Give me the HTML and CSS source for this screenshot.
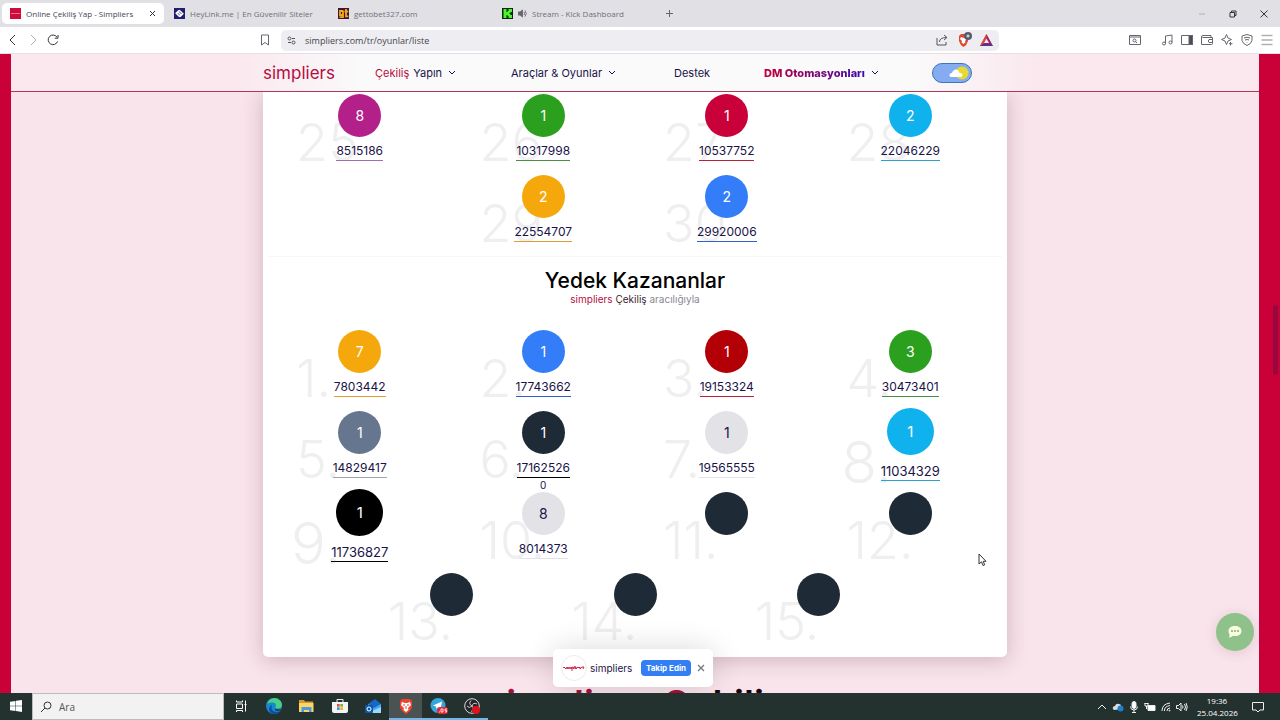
FILE: index.html
```html
<!DOCTYPE html>
<html lang="tr">
<head>
<meta charset="utf-8">
<meta name="viewport" content="width=device-width, initial-scale=1">
<title>Online Çekiliş Yap - Simpliers</title>
<link rel="stylesheet" href="styles.css">
</head>
<body>
<div class="tabs">
  <div class="tab active"><svg class="fav" viewBox="0 0 11 11"><path fill="#cf0a3c" d="M0 0h11v11H0z"/><path stroke="#e8718c" d="M1 5.500h9"/></svg><span class="tab-title">Online Çekiliş Yap - Simpliers</span><button class="icon" aria-label="Sekmeyi kapat"><svg width="7" height="7" viewBox="0 0 7 7"><path d="M1 1l5 5M6 1l-5 5"/></svg></button></div>
  <div class="tab"><svg class="fav" viewBox="0 0 11 11"><path fill="#211d70" d="M0 0h11v11H0z"/><g fill="none" stroke="#fff" stroke-width="1.600"><path d="M5 2.500L2.300 5.200l3.500 3.500M6 8.500l2.700-2.700-3.500-3.500M4 4l3 3"/></g></svg><span class="tab-title">HeyLink.me | En Güvenilir Siteler</span></div>
  <div class="tab"><svg class="fav" viewBox="0 0 11 11"><path fill="#3b1730" d="M0 0h11v11H0z"/><g fill="none" stroke="#f5a81c" stroke-width="1.800"><path d="M5 3H2v4h3M5 2.500v6.700H1.500M8 1v7.300h2.300M6.500 3.500h3.800"/></g></svg><span class="tab-title">gettobet327.com</span></div>
  <div class="tab"><svg class="fav" viewBox="0 0 11 11"><path fill="#07280a" d="M0 0h11v11H0z"/><path fill="#4bf52c" d="M1.500 1H4.500v3h1V3h1V1H10v3H8.500v1h-1v1h1v1H10v3H6.500V8h-1V7h-1v3h-3z"/></svg><svg width="9" height="9" viewBox="0 0 9 9" class="line"><path fill="#666" d="M0 3h2l2.500-2v7L2 6H0z"/><path d="M6 3q1 1.500 0 3M7 1.500q2.500 3 0 6"/></svg><span class="tab-title">Stream - Kick Dashboard</span></div>
  <button class="icon new-tab" aria-label="Yeni sekme"><svg width="7" height="7" viewBox="0 0 7 7"><path d="M3.500 0v7M0 3.500h7"/></svg></button>
  <div class="win">
    <button class="icon faint" aria-label="Küçült"><svg width="8" height="8" viewBox="0 0 8 8"><path d="M1 4h6"/></svg></button>
    <button class="icon" aria-label="Geri yükle"><svg width="8" height="8" viewBox="0 0 8 8"><path d="M1 2.500h4.500V7H1zM2.500 2V1H7v4.500H6"/></svg></button>
    <button class="icon" aria-label="Kapat"><svg width="8" height="8" viewBox="0 0 8 8"><path d="M.5.5l7 7M7.500.5l-7 7"/></svg></button>
  </div>
</div>

<div class="toolbar">
  <div class="tb-left">
    <button class="icon" aria-label="Geri"><svg width="12" height="12" viewBox="0 0 12 12"><path d="M8 1L3 6l5 5"/></svg></button>
    <button class="icon faint" aria-label="İleri"><svg width="12" height="12" viewBox="0 0 12 12"><path d="M4 1l5 5-5 5"/></svg></button>
    <button class="icon" aria-label="Yenile"><svg width="12" height="12" viewBox="0 0 12 12"><path d="M10.500 7.500A4.800 4.800 0 1 1 10 3.200M11 1v3.200H7.800"/></svg></button>
    <button class="icon soft mark" aria-label="Yer işareti"><svg width="10" height="12" viewBox="0 0 10 12"><path d="M1.500 1h7v10L5 8.500 1.500 11z"/></svg></button>
  </div>
  <div class="address">
    <svg class="line" width="9" height="9" viewBox="0 0 9 9"><circle cx="2.500" cy="2.500" r="1.500"/><circle cx="6.500" cy="6.500" r="1.500"/><path d="M5 2.500h3M1 6.500h3"/></svg>
    <input type="text" value="simpliers.com/tr/oyunlar/liste" aria-label="Adres">
    <svg class="line" width="12" height="12" viewBox="0 0 12 12"><path d="M1 4v7h9V8M3.500 8q0-4.500 7-4.500M8 1l3 2.500L8 6"/></svg>
    <svg width="16" height="16" viewBox="0 0 16 16"><path fill="#e0482c" d="M3 4l2-2h5l2 2v5q-1 4-4.500 6Q4 13 3 9z"/><path fill="#fff" d="M5 5l2 .7h1L10 5l1 2-2 2 .5 1.500-2 1.500-2-1.500L6 9 4 7z"/><circle cx="12" cy="4" r="4" fill="#575a6e"/><circle cx="12" cy="4" r="1" fill="none" stroke="#fff"/></svg>
    <svg width="13" height="12" viewBox="0 0 13 12"><path fill="#9b2265" d="M6.500 0L13 12H0z"/><path fill="#e04a2f" d="M6.500 0L0 12l3-1.500L6.500 4z"/><path fill="#54358f" d="M0 12h13l-3-2H3z"/><path fill="#f5eef4" d="M6.500 4.500L9 9H4z"/></svg>
  </div>
  <div class="tb-right">
    <button class="icon soft find" aria-label="Sayfada ara"><svg width="12" height="12" viewBox="0 0 12 12"><path d="M.5 1.500h11v9H.5zM.5 3h11"/><circle cx="5.500" cy="6.500" r="1.500"/><path d="M6.500 7.500L8 9"/></svg></button>
    <button class="icon soft" aria-label="Müzik"><svg width="12" height="12" viewBox="0 0 12 12"><path d="M4.500 9.500V2l6.500-1v7.500"/><circle cx="3" cy="9.500" r="1.500"/><circle cx="9.500" cy="8.500" r="1.500"/></svg></button>
    <button class="icon soft" aria-label="Kenar çubuğu"><svg width="12" height="12" viewBox="0 0 12 12"><path d="M.5 1.500h11v9H.5z"/><path fill="#4c4c55" d="M8 1.500h3.500v9H8z"/></svg></button>
    <button class="icon soft" aria-label="Cüzdan"><svg width="12" height="12" viewBox="0 0 12 12"><path d="M10 3.500V1.500H2q-1.500 0-1.500 1.500v7.500h10q1 0 1-1v-6h-10M11.500 5.500H8q-1.500 1.500 0 3h3.500"/></svg></button>
    <button class="icon soft" aria-label="Leo"><svg width="12" height="12" viewBox="0 0 12 12"><path d="M5.500.5L7 4l3.500 1.500L7 7l-1.500 3.500L4 7 .5 5.500 4 4zM9.500 8v3.500M8 9.700h3.500"/></svg></button>
    <button class="icon soft" aria-label="VPN"><svg width="12" height="12" viewBox="0 0 12 12"><path d="M6 .5l5 1.500v4.500Q10 10 6 11.500 2 10 1 6.500V2zM3 4q3-1.500 6 0M4 6q2-1 4 0M6 8v.5"/></svg></button>
    <button class="icon faint" aria-label="Menü"><svg width="12" height="12" viewBox="0 0 12 12"><path d="M.5 1.500h11M.5 6h11M.5 10.500h11" stroke-width="1.300"/></svg></button>
  </div>
</div>

<main class="frame">
  <div class="page">
    <header class="nav">
      <nav class="nav-inner">
        <a class="brand" href="#">simpliers</a>
        <a href="#"><span class="accent">Çekiliş</span> Yapın <svg class="chev" viewBox="0 0 8 5"><path d="M1 1l3 3 3-3"/></svg></a>
        <a href="#">Araçlar &amp; Oyunlar <svg class="chev" viewBox="0 0 8 5"><path d="M1 1l3 3 3-3"/></svg></a>
        <a href="#">Destek</a>
        <a href="#"><b class="dm">DM Otomasyonları</b> <svg class="chev" viewBox="0 0 8 5"><path d="M1 1l3 3 3-3"/></svg></a>
        <button class="theme" aria-label="Tema"><svg width="40" height="20" viewBox="0 0 40 20"><rect x=".5" y=".5" width="39" height="19" rx="9.500" fill="#85abf0" stroke="#3977b8"/><circle cx="30" cy="10" r="6.500" fill="#e7d832"/><path fill="#fff" d="M19 14q-2-.5-1.500-2.500.5-1.500 2.500-1.500 1-3.500 4-3.500 2.500 0 3.500 3.500 3 0 3 2 0 2-2 2z"/></svg></button>
      </nav>
    </header>

    <section class="card">
      <div class="grid">
        <div class="item"><span class="ghost">25</span><span class="ball purple">8</span><span class="code">8515186</span></div>
        <div class="item"><span class="ghost">26</span><span class="ball green">1</span><span class="code">10317998</span></div>
        <div class="item"><span class="ghost">27</span><span class="ball crimson">1</span><span class="code">10537752</span></div>
        <div class="item"><span class="ghost">28</span><span class="ball sky">2</span><span class="code">22046229</span></div>
        <div class="item"><span class="ghost">29</span><span class="ball amber">2</span><span class="code">22554707</span></div>
        <div class="item"><span class="ghost">30</span><span class="ball blue">2</span><span class="code">29920006</span></div>
      </div>
      <div class="heading">
        <h1>Yedek Kazananlar</h1>
        <p><span class="accent">simpliers</span> <span class="fade">Çekiliş</span> aracılığıyla</p>
      </div>
      <div class="grid">
        <div class="item"><span class="ghost">1.</span><span class="ball amber">7</span><span class="code">7803442</span></div>
        <div class="item"><span class="ghost">2.</span><span class="ball blue">1</span><span class="code">17743662</span></div>
        <div class="item"><span class="ghost">3.</span><span class="ball red">1</span><span class="code">19153324</span></div>
        <div class="item"><span class="ghost">4.</span><span class="ball green">3</span><span class="code">30473401</span></div>
        <div class="item"><span class="ghost">5.</span><span class="ball slate">1</span><span class="code">14829417</span></div>
        <div class="item"><span class="ghost">6.</span><span class="ball navy">1</span><span class="code black-line">17162526</span></div>
        <div class="item"><span class="ghost">7.</span><span class="ball light">1</span><span class="code">19565555</span></div>
        <div class="item big"><span class="ghost">8.</span><span class="ball sky">1</span><span class="code">11034329</span></div>
        <div class="item big"><span class="ghost">9.</span><span class="ball black">1</span><span class="code">11736827</span></div>
        <div class="item"><span class="ghost">10.</span><span class="count">0</span><span class="ball light">8</span><span class="code">8014373</span></div>
        <div class="item"><span class="ghost">11.</span><span class="ball navy"></span></div>
        <div class="item"><span class="ghost">12.</span><span class="ball navy"></span></div>
        <div class="item"><span class="ghost">13.</span><span class="ball navy"></span></div>
        <div class="item"><span class="ghost">14.</span><span class="ball navy"></span></div>
        <div class="item"><span class="ghost">15.</span><span class="ball navy"></span></div>
      </div>
    </section>
    <h2 class="next"><span>simpliers Ç</span>ekiliş</h2>
    <div class="toast">
      <svg width="26" height="26" viewBox="0 0 26 26"><circle cx="13" cy="13" r="12.500" fill="#fff" stroke="#ececf0"/><path d="M2 13q1-2 2 0t2-1v2l1-2 1 2 1-2 1 2 1-2v4m0-4q3 0 1 2l2-3v3l1-2v2l2-2 1 1 1-1v2l2-2 2 0-1 2" fill="none" stroke="#cf2650"/></svg>
      <span class="toast-name">simpliers</span>
      <button class="follow">Takip Edin</button>
      <button class="icon dismiss" aria-label="Kapat"><svg width="8" height="8" viewBox="0 0 8 8"><path d="M1 1l6 6M7 1L1 7" stroke-width="1.300"/></svg></button>
    </div>
    <button class="chat" aria-label="Sohbet"><svg width="14" height="12" viewBox="0 0 14 12"><path fill="#fbfbe0" d="M7 0c4 0 6.500 2 6.500 5S11 10 7 10q-1 0-2-.3Q3.500 11.500.5 11.500 2 10 1.500 8.500.5 7 .5 5C.5 2 3 0 7 0z"/><g fill="#79b275"><circle cx="4" cy="5" r="1"/><circle cx="7" cy="5" r="1"/><circle cx="10" cy="5" r="1"/></g></svg></button>
    <svg class="cursor" width="9" height="14" viewBox="0 0 9 14"><path d="M1 1v10l2.500-2.200L5 12.500l1.700-.7L5.200 8.300H8z" fill="#fff" stroke="#333"/></svg>
  </div>
  <div class="thumb"></div>
</main>

<footer class="taskbar">
  <button class="task start" aria-label="Başlat"><svg width="12" height="12" viewBox="0 0 12 12"><path fill="#fff" d="M0 1.700l5.500-.8v4.800H0zM6 .8L12 0v5.700H6zM0 6.200h5.500V11L0 10.300zM6 6.200h6V12l-6-.9z"/></svg></button>
  <label class="search"><svg class="line" width="12" height="12" viewBox="0 0 12 12"><circle cx="7.500" cy="4.500" r="3.500"/><path d="M5 7L1 11"/></svg><input type="text" placeholder="Ara" aria-label="Ara"></label>
  <button class="task" aria-label="Görev görünümü"><svg width="12" height="12" viewBox="0 0 12 12" fill="none" stroke="#fff"><path d="M1.500 4h6v4.500h-6zM1.500 .5v1.500h6V.5M1.500 12v-1.500h6V12M10.500 .5v11M9.500 4.500h2"/></svg></button>
  <button class="task" aria-label="Edge"><svg width="16" height="16" viewBox="0 0 16 16"><circle cx="8" cy="8" r="8" fill="#1787cf"/><path fill="#4bce87" d="M1 6Q3 0 8.500 0 15 .5 16 6.500q0 4-4.500 4-2.500 0-2-1.500Q11 5 7 4.500 3 4 1 6z"/><path fill="#0a4fa0" d="M6 7q-2 6 4 7 3 0 4.500-1.500Q12 16 8 16 3 15 3 11q.5-3 3-4z"/><path fill="#24302f" d="M9.500 9q-1.500 2.500 3 2.500 2 0 3-1-1 2.500-4 2.500-4-1-2-4z"/></svg></button>
  <button class="task" aria-label="Dosya Gezgini"><svg width="15" height="14" viewBox="0 0 15 14"><path fill="#d79a28" d="M0 1h5l1 1.500h8V5H0z"/><path fill="#fbd567" d="M0 4h14.500v9H0z"/><path fill="#4b9bdc" d="M2.500 8h10v5H10v-2H5v2H2.500z"/></svg></button>
  <button class="task" aria-label="Store"><svg width="16" height="16" viewBox="0 0 16 16"><path fill="none" stroke="#eee" d="M5 4V1.500h6V4"/><path fill="#f4f4f4" d="M0 4h16v9q0 2-2 2H2q-2 0-2-2z"/><path fill="#e45034" d="M5 6h2.700v2.700H5z"/><path fill="#7bb737" d="M8.300 6H11v2.700H8.300z"/><path fill="#2b9ae1" d="M5 9.300h2.700V12H5z"/><path fill="#f4b625" d="M8.300 9.300H11V12H8.300z"/></svg></button>
  <button class="task" aria-label="Outlook"><svg width="16" height="16" viewBox="0 0 16 16"><path fill="#1769c5" d="M3 6l7-5 6 5v9H3z"/><path fill="#47a8ef" d="M3 6l6 4 7-4v9H3z"/><path fill="#9dd8ff" d="M3 15l13-6v6z"/><rect y="7" width="8" height="8" rx="1" fill="#0c59ac"/><circle cx="4" cy="11" r="2" fill="none" stroke="#fff"/></svg></button>
  <button class="task open current" aria-label="Brave"><svg width="14" height="16" viewBox="0 0 14 16"><path fill="#ef452f" d="M1 3l2-2h8l2 2v6q-1 4-6 7Q2 13 1 9z"/><path fill="#fff" d="M3 4l3 1h2l3-1 1 3-3 3 .5 2L7 14l-2.500-2L5 10 2 7z"/><path stroke="#ef452f" d="M4 7h2M8 7h2M7 8v3"/></svg></button>
  <button class="task open" aria-label="Telegram"><svg width="18" height="16" viewBox="0 0 18 16"><circle cx="8" cy="7.500" r="7.500" fill="#35a6dc"/><path fill="#fff" d="M3 7.500L12 3.500l-1.500 8L8 9.500 6.500 11 6 8.500z"/><rect x="7" y="9" width="11" height="7" rx="3" fill="#e02a3c"/><path d="M9 14h1M11 11h2v3h-2zM17 11h-2v1.500h1.500V14H15" fill="none" stroke="#fff" stroke-width=".8"/></svg></button>
  <button class="task open" aria-label="OBS"><svg width="16" height="16" viewBox="0 0 16 16"><circle cx="8" cy="8" r="7.300" fill="#24262b" stroke="#ddd"/><path d="M8 8q-4-2-1-5.500M8 8q1-4 5-2M8 8q3 3-1 5.500M8 8q-3 3-5 0" fill="none" stroke="#ccc"/><circle cx="12" cy="12" r="4" fill="#e0121c"/></svg></button>
  <div class="tray">
    <svg width="10" height="10" viewBox="0 0 10 10"><path d="M1 7l4-4 4 4"/></svg>
    <svg width="12" height="10" viewBox="0 0 12 10"><path fill="#d8dde2" stroke="none" d="M2 8Q0 7 1 5q1-1 2-1 1-3 4-2 2 0 2 2 2 1 2 3z"/><circle cx="8.500" cy="6.500" r="3" fill="#1d7ed2" stroke="none"/></svg>
    <svg width="10" height="12" viewBox="0 0 10 12"><rect x="3" y=".5" width="4" height="7" rx="2" fill="#fff"/><path d="M1.500 5.500q0 3.500 3.500 3.500t3.500-3.500M5 9v2.500M3 11.500h4"/></svg>
    <svg width="12" height="10" viewBox="0 0 12 10"><path fill="#fff" d="M4 3.500h7v5H4z"/><path d="M.5 1.500h4M1 1v3h3V1M2.500 4v3"/></svg>
    <svg width="10" height="10" viewBox="0 0 10 10"><path d="M1 9Q1 2 9 1M3.500 9Q3 4.500 9 3.500M6 9q0-3 3-3"/><circle cx="8.500" cy="8.500" r=".5"/></svg>
    <svg width="12" height="10" viewBox="0 0 12 10"><path d="M.5 3.500h2L5 1v8L2.500 6.500h-2zM6.500 3.500q1 1.500 0 3M8.500 2q2 3 0 6M10 1q2.500 4 0 8"/></svg>
    <time class="clock">19:36<br>25.04.2026</time>
    <svg width="12" height="12" viewBox="0 0 12 12"><path d="M.5 1.500h11v7.500H8l-2 2-2-2H.5z"/></svg>
  </div>
</footer>
</body>
</html>
```
FILE: styles.css
```css
* { box-sizing: border-box; }
body {
  margin: 0;
  height: 100vh;
  display: flex;
  flex-direction: column;
  overflow: hidden;
  font-family: Inter, "Liberation Sans", sans-serif;
  font-size: 11px;
  color: #191348;
}
button { border: 0; padding: 0; background: none; font: inherit; color: inherit; }
a { color: inherit; text-decoration: none; }
svg { flex: none; display: block; }
h1, h2, p { margin: 0; }
.icon { display: flex; align-items: center; justify-content: center; color: #35353b; }
.icon svg, .line { fill: none; stroke: currentColor; }
.soft { color: #66666e; }
.faint { color: #b0b0b5; }

.tabs, .toolbar, .taskbar { font-family: "Open Sans", "Noto Sans", sans-serif; flex: none; }
.tabs { display: flex; align-items: center; height: 27px; padding: 0 12px 0 2px; background: #e1e0e5; font-size: 8px; color: #707077; }
.tab { display: flex; align-items: center; gap: 5px; width: 162px; height: 21px; margin-right: 2px; padding: 0 8px; border-radius: 5px; white-space: nowrap; }
.tab.active { background: #fff; color: #45454c; }
.tab-title { flex: 1; }
.fav { width: 11px; height: 11px; }
.new-tab { margin-left: 8px; color: #666; }
.win { display: flex; gap: 23px; margin-left: auto; }

.toolbar { display: flex; align-items: center; height: 27px; background: #fff; border-bottom: 1px solid #e4e0e4; }
.tb-left { display: flex; align-items: center; gap: 8px; flex: 0 0 281px; padding: 0 11px 0 7px; }
.mark { margin-left: auto; }
.address { flex: 1; display: flex; align-items: center; gap: 8px; height: 21px; padding: 0 6px; border-radius: 5px; background: #eeedf1; color: #55555c; }
.address input { flex: 1; min-width: 0; border: 0; padding: 0 1px; background: none; font: inherit; font-size: 9px; color: #45454c; }
.tb-right { display: flex; align-items: center; justify-content: flex-end; gap: 8px; flex: 0 0 281px; padding-right: 7px; }
.find { margin-right: 12px; }

.frame { position: relative; flex: 1; min-height: 0; display: flex; padding: 0 21px 0 11px; background: #ca0039; }
.page { position: relative; flex: 1; display: flex; flex-direction: column; align-items: center; overflow: hidden; background: #f8e4ea; }
.thumb { position: absolute; right: 2px; top: 251px; width: 5px; height: 70px; border-radius: 3px; background: #98083f; }

.nav { position: relative; z-index: 3; flex: none; align-self: stretch; display: flex; justify-content: center; height: 38px; border-bottom: 1px solid #ad385b; background: linear-gradient(90deg, #fae8ee 0 18%, #fafafa 28% 72%, #fae8ee 82%) padding-box; }
.nav-inner { display: grid; grid-template-columns: 112px 136px 163px 90px 168px auto; align-items: center; width: 744px; white-space: nowrap; }
.nav-inner a { display: flex; align-items: center; gap: 4px; }
.nav-inner .brand { font-size: 17px; color: #b60d40; }
.chev { width: 8px; height: 5px; margin-left: 2px; fill: none; stroke: currentColor; }
.accent { color: #b60d40; }
.dm { font-weight: 800; background: linear-gradient(90deg, #c20037, #3b0bae); background-clip: text; color: transparent; }

.card { position: relative; flex: none; width: 744px; max-width: 100%; padding: 2px 5px 3px; border-radius: 0 0 5px 5px; background: #fff; box-shadow: 0 3px 20px rgba(110, 50, 80, .28); }
.grid { display: flex; flex-wrap: wrap; justify-content: center; }
.item { position: relative; width: 25%; height: 81px; display: flex; flex-direction: column; align-items: center; }
.ghost { position: absolute; left: 28px; top: 18px; font-size: 52px; line-height: 62px; font-weight: 300; color: #efeff0; }
.ball { position: relative; display: flex; align-items: center; justify-content: center; width: 43px; height: 43px; border-radius: 50%; font-size: 14px; color: #fff; }
.code { position: relative; margin-top: 5px; border-bottom: 1px solid currentColor; font-size: 12px; line-height: 18px; }
.count { position: absolute; top: -14px; font-size: 10px; line-height: 14px; }
.big .ball { width: 47px; height: 47px; margin-top: -3px; font-size: 15px; }
.big .code { margin-top: 7px; font-size: 13px; }
.big .ghost { left: 23px; top: 18px; font-size: 58px; line-height: 66px; }
.purple { background: #b4208a; }
.green { background: #2ba01f; }
.crimson { background: #c90039; }
.sky { background: #10b2ee; }
.amber { background: #f5a80c; }
.blue { background: #337df8; }
.red { background: #b30006; }
.slate { background: #67768f; }
.navy { background: #1f2a37; }
.black { background: #000; }
.light { background: #e3e3e7; color: #191348; }
.purple + .code { border-color: #a36ab8; }
.green + .code { border-color: #48913d; }
.crimson + .code, .red + .code { border-color: #b3243a; }
.sky + .code { border-color: #2e9fd1; }
.amber + .code { border-color: #e09b35; }
.blue + .code { border-color: #2d63c8; }
.slate + .code { border-color: #a0a5b0; }
.light + .code { border-color: #e3e3e7; }
.black + .code, .navy + .black-line { border-color: #000; }
.heading { height: 74px; padding-top: 11px; border-top: 1px solid #f8f6f8; text-align: center; }
.heading h1 { font-size: 21px; line-height: 26px; font-weight: 500; color: #000; }
.heading p { font-size: 10px; line-height: 10px; color: #8a8790; }
.fade { color: #3a1c2c; }
.next { flex: none; margin-top: 24px; font-size: 38px; line-height: 46px; font-weight: 600; color: #1c0710; }
.next span { color: #ab0d3d; }

.toast { position: absolute; z-index: 4; left: 50%; bottom: 6px; margin-left: -82px; display: flex; align-items: center; width: 160px; height: 38px; padding: 0 8px; border-radius: 5px; background: #fff; box-shadow: 0 0 30px rgba(0, 0, 0, .15); }
.toast-name { flex: 1; padding-left: 3px; font-size: 10px; }
.follow { width: 50px; height: 16px; border-radius: 4px; background: #337df5; color: #fff; font-size: 8px; font-weight: 700; }
.dismiss { margin-left: 6px; color: #777; }
.chat { position: absolute; right: 5px; bottom: 42px; width: 38px; height: 38px; display: flex; align-items: center; justify-content: center; border-radius: 50%; background: #8fc18b; box-shadow: 0 2px 12px rgba(150, 80, 120, .2); }
.cursor { position: absolute; left: 967px; top: 499px; }

.taskbar { display: flex; height: 27px; background: #24322f; }
.task { display: flex; align-items: center; justify-content: center; width: 33px; border-bottom: 2px solid transparent; }
.start { width: 32px; }
.open { border-color: #75b5e8; }
.current { background: #4a5352; }
.search { display: flex; align-items: center; gap: 7px; width: 192px; padding: 0 7px; background: #f2f2f2; border: 1px solid #bbb; color: #333; }
.search input { flex: 1; min-width: 0; border: 0; padding: 0; background: none; font: inherit; font-size: 10px; }
.search input::placeholder { color: #555; }
.tray { display: flex; align-items: center; gap: 5px; margin-left: auto; padding-right: 16px; color: #fff; }
.tray svg { fill: none; stroke: #eee; }
.clock { width: 40px; margin: 0 10px 0 4px; font-size: 8px; line-height: 12px; text-align: center; }
```
